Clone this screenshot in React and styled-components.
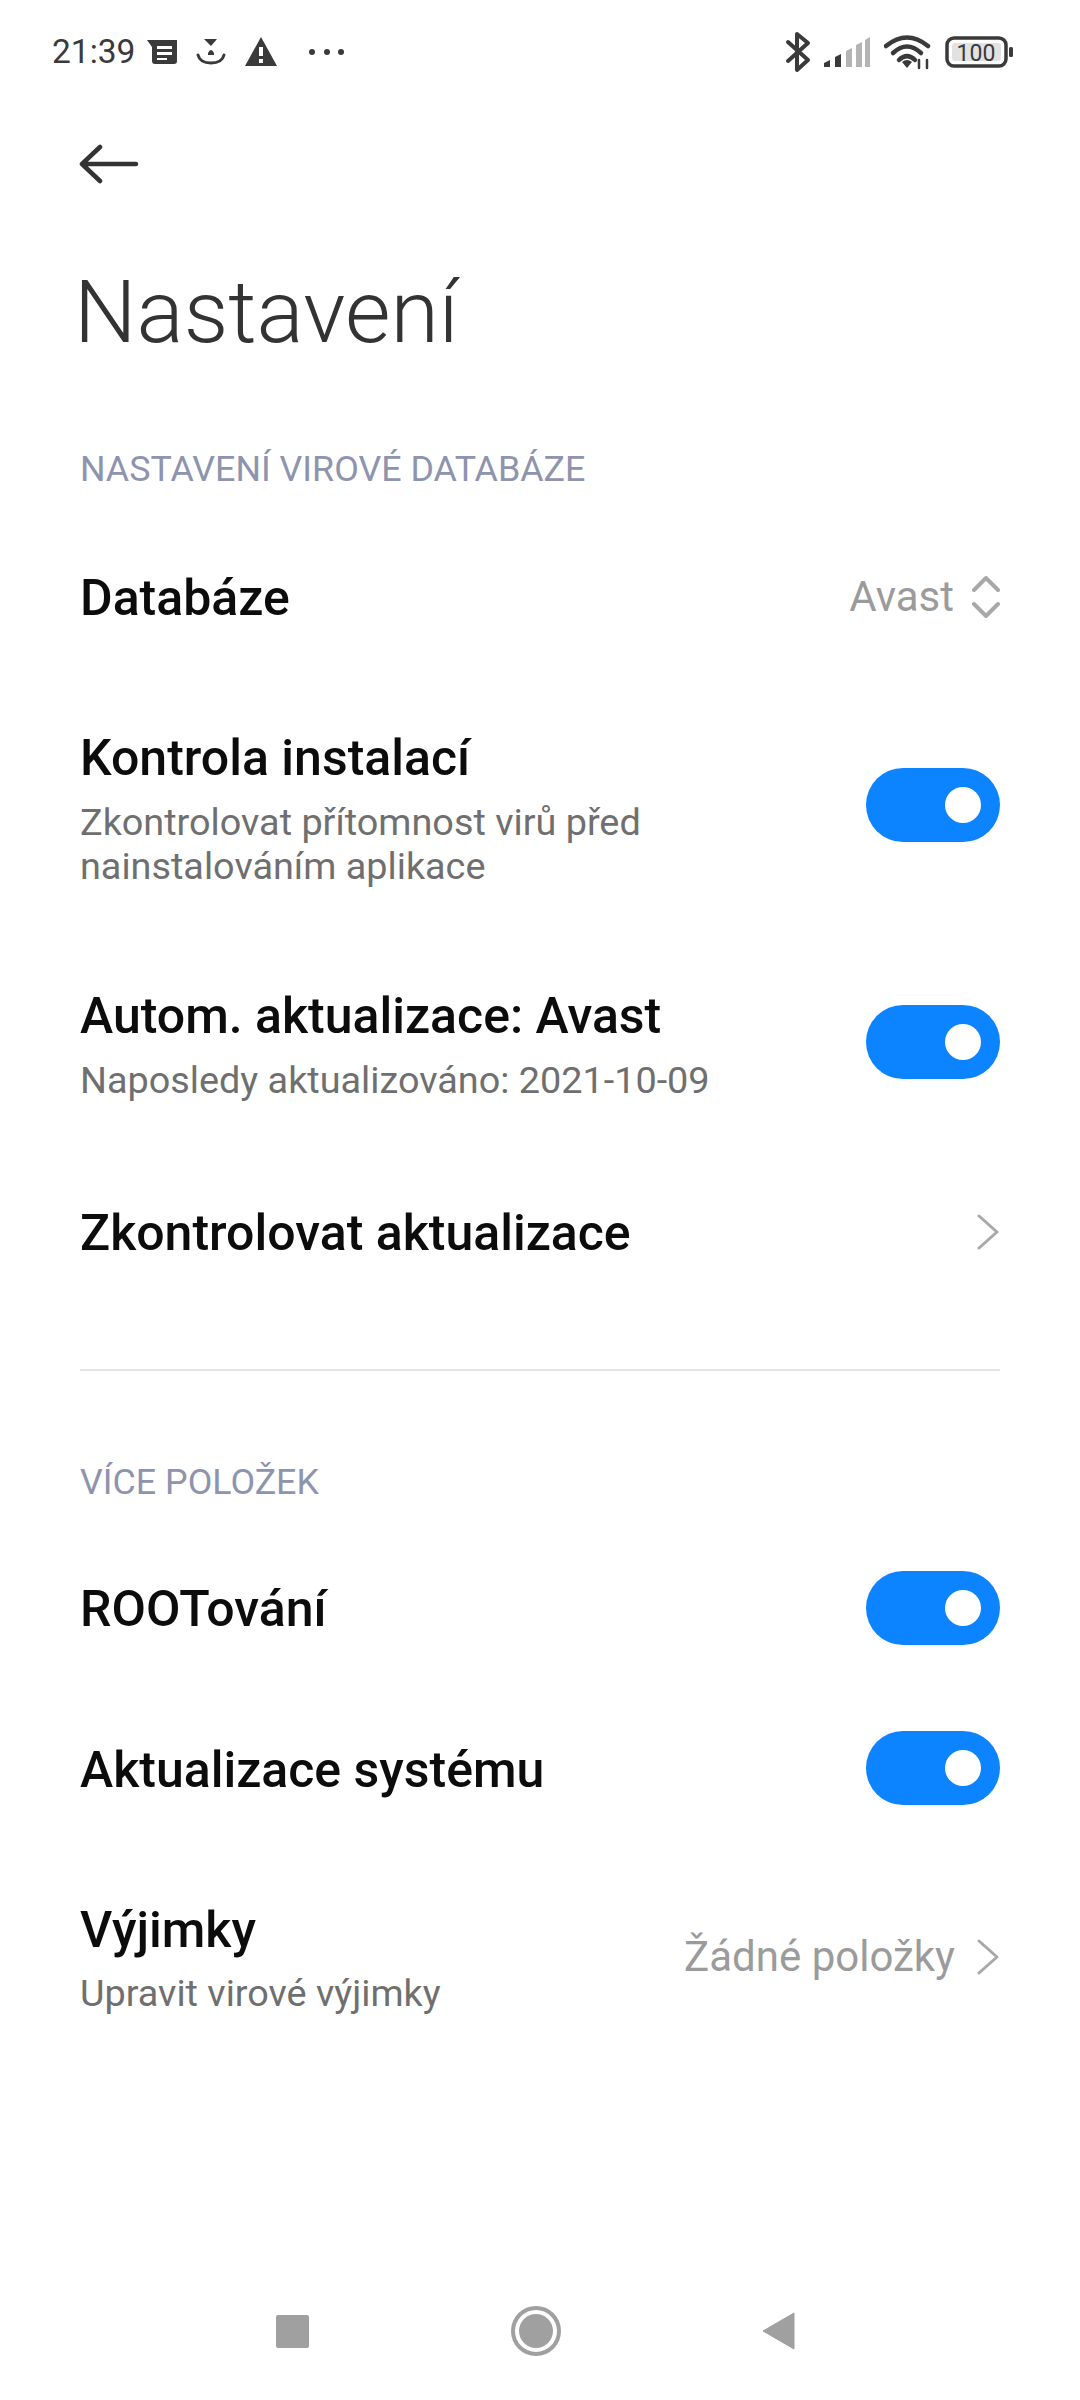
import React from "react";
import styled, { createGlobalStyle } from "styled-components";

const Global = createGlobalStyle`
  html, body { margin: 0; padding: 0; background: #fff; }
  * { box-sizing: border-box; }
  body { font-family: Roboto, "Noto Sans", "Liberation Sans", sans-serif; }
`;
const Page = styled.div`
  width: 1080px; height: 2400px; background: #fff; display: flex; flex-direction: column; overflow: hidden;
`;
const StatusBar = styled.div`
  height: 104px; padding: 0 66px 0 52px; display: flex; align-items: center; justify-content: space-between; color: #333;
`;
const StatusGroup = styled.div`
  display: flex; align-items: center;
`;
const Time = styled.span`
  font-size: 33.5px; line-height: 40px; color: #3a3a3a; width: 92px;
`;
const Icon = styled.svg`
  display: block; flex: none; margin-left: ${p => p.$ml || 0}px;
`;
const BackBar = styled.div`
  height: 120px; padding-left: 79px; display: flex; align-items: center;
`;
const Title = styled.h1`
  margin: 0; height: 176px; padding-left: 74px; font-size: 88px; line-height: 176px; font-weight: 300; color: #333;
`;
const Content = styled.div`
  padding: 0 80px; display: flex; flex-direction: column;
`;
const SectionHead = styled.div`
  height: ${p => p.$h}px; margin-top: ${p => p.$top || 0}px; padding-top: 1px; display: flex; align-items: center;
  font-size: 35.8px; color: #8e94ae;
`;
const Row = styled.div`
  height: ${p => p.$h}px; display: flex; align-items: center; justify-content: space-between;
`;
const TextBlock = styled.div`
  display: flex; flex-direction: column; gap: ${p => p.$gap ?? 12}px; padding-top: ${p => p.$pt ?? 6}px;
`;
const RowTitle = styled.div`
  font-size: 50px; line-height: 60px; font-weight: 500; color: #0c0c0c;
`;
const SoloTitle = styled(RowTitle)`
  padding-top: ${p => p.$pt ?? 1}px;
`;
const RowSub = styled.div`
  font-size: 37.8px; line-height: 44px; color: #6f6f6f;
`;
const Value = styled.div`
  display: flex; align-items: center; gap: 21px; font-size: 42px; line-height: 50px; color: #9b9b9b;
`;
const Toggle = styled.div`
  width: 134px; height: 74px; border-radius: 37px; background: #0d84ff; display: flex; align-items: center;
  justify-content: flex-end; padding-right: 19px; flex: none;
`;
const Knob = styled.div`
  width: 36px; height: 36px; border-radius: 50%; background: #fff;
`;
const Divider = styled.div`
  height: 2px; margin-top: 37px; background: #e4e4e4;
`;
const NavBar = styled.div`
  margin-top: auto; height: 138px; padding: 0 285px 0 276px; display: flex; align-items: center; justify-content: space-between;
`;

const Chevron = () => (
  <Icon width="24" height="38" viewBox="0 0 24 38" fill="none" stroke="#a8a8a8" strokeWidth="3" strokeLinecap="round" strokeLinejoin="round">
    <path d="M3 3 L21 19 L3 35" />
  </Icon>
);
const UpDown = () => (
  <Icon $ml="-3" width="28" height="44" viewBox="0 0 28 44" fill="none" stroke="#a8a8a8" strokeWidth="4" strokeLinecap="round" strokeLinejoin="round">
    <path d="M2 15 L14 3 L26 15" />
    <path d="M2 29 L14 41 L26 29" />
  </Icon>
);
const Switch = () => <Toggle><Knob /></Toggle>;

export default function App() {
  return (
    <Page>
      <Global />
      <StatusBar>
        <StatusGroup>
          <Time>21:39</Time>
          <Icon $ml="3" width="32" height="26" viewBox="0 0 32 26" fill="#3a3a3a">
            <path d="M0 1 H30 V22 Q30 25 27 25 H8 Q5 25 5 22 V8 Z" />
            <path d="M10 7 H25 V10 H10 Z M10 13 H25 V16 H10 Z M10 19 H20 V21 H10 Z" fill="#fff" />
          </Icon>
          <Icon $ml="17" width="30" height="28" viewBox="0 0 30 28" fill="none">
            <path d="M8 1 H21 L15 8 Z M12 15 Q15 9 18 15 V17 H12 Z" fill="#3a3a3a" />
            <path d="M2 17 Q4 25 15 25 Q26 25 28 17" stroke="#3a3a3a" strokeWidth="3" strokeLinecap="round" />
          </Icon>
          <Icon $ml="18" width="34" height="32" viewBox="0 0 34 32" fill="#3a3a3a">
            <path d="M17 1 L33 30 H1 Z" />
            <path d="M15 11 H19 V20 H15 Z M15 23 H19 V27 H15 Z" fill="#fff" />
          </Icon>
          <Icon $ml="30" width="38" height="8" viewBox="0 0 38 8" fill="#3a3a3a">
            <circle cx="4" cy="4" r="3" /><circle cx="19" cy="4" r="3" /><circle cx="33" cy="4" r="3" />
          </Icon>
        </StatusGroup>
        <StatusGroup>
          <Icon width="26" height="42" viewBox="0 0 26 42" fill="none" stroke="#3a3a3a" strokeWidth="4" strokeLinecap="round" strokeLinejoin="round">
            <path d="M3 11 L23 29 L12 39 V3 L23 12 L3 30" />
          </Icon>
          <Icon $ml="12" width="48" height="32" viewBox="0 0 48 32">
            <path d="M1 27 L7 24 V31 H1 Z M12 21 L18 18 V31 H12 Z" fill="#3a3a3a" />
            <path d="M23 15 L29 12 V31 H23 Z M33 9 L39 6 V31 H33 Z M42 4 L47 1 V31 H42 Z" fill="#b4b4b4" />
          </Icon>
          <Icon $ml="13" width="48" height="36" viewBox="0 0 48 36" fill="none" stroke="#3a3a3a" strokeWidth="4.5" strokeLinecap="round">
            <path d="M2 12 Q23 -5 44 12" />
            <path d="M9 19 Q23 6 37 19" />
            <path d="M15 26 Q23 18 31 26" />
            <path d="M18 28 L23 34 L28 28 Q23 24 18 28 Z" fill="#3a3a3a" stroke="none" />
            <path d="M35 26 V34 M43 26 V34" strokeWidth="2.5" />
          </Icon>
          <Icon $ml="13" width="69" height="32" viewBox="0 0 69 32">
            <rect x="2" y="2" width="59" height="28" rx="7" fill="#fff" stroke="#3a3a3a" strokeWidth="3.5" />
            <rect x="7" y="7" width="49" height="18" rx="3" fill="#e2e2e2" />
            <rect x="64" y="11" width="4" height="10" rx="1.5" fill="#3a3a3a" />
            <text x="31" y="25" textAnchor="middle" fontSize="23" fontFamily="Roboto, sans-serif" fill="#3a3a3a">100</text>
          </Icon>
        </StatusGroup>
      </StatusBar>

      <BackBar>
        <Icon width="60" height="40" viewBox="0 0 60 40" fill="none" stroke="#333" strokeWidth="4.5" strokeLinecap="round" strokeLinejoin="round">
          <path d="M3 20 H57 M21 3 L3 20 L21 37" />
        </Icon>
      </BackBar>
      <Title>Nastavení</Title>

      <Content>
        <SectionHead $h={136}>NASTAVENÍ VIROVÉ DATABÁZE</SectionHead>
        <Row $h={122}>
          <SoloTitle>Databáze</SoloTitle>
          <Value>Avast <UpDown /></Value>
        </Row>
        <Row $h={294}>
          <TextBlock>
            <RowTitle>Kontrola instalací</RowTitle>
            <RowSub>Zkontrolovat přítomnost virů před<br />nainstalováním aplikace</RowSub>
          </TextBlock>
          <Switch />
        </Row>
        <Row $h={180}>
          <TextBlock $pt={4}>
            <RowTitle>Autom. aktualizace: Avast</RowTitle>
            <RowSub>Naposledy aktualizováno: 2021-10-09</RowSub>
          </TextBlock>
          <Switch />
        </Row>
        <Row $h={200}>
          <SoloTitle>Zkontrolovat aktualizace</SoloTitle>
          <Value><Chevron /></Value>
        </Row>
        <Divider />
        <SectionHead $h={110} $top={55}>VÍCE POLOŽEK</SectionHead>
        <Row $h={144}>
          <SoloTitle>ROOTování</SoloTitle>
          <Switch />
        </Row>
        <Row $h={176}>
          <SoloTitle $pt={4}>Aktualizace systému</SoloTitle>
          <Switch />
        </Row>
        <Row $h={202}>
          <TextBlock $pt={0} $gap={11}>
            <RowTitle>Výjimky</RowTitle>
            <RowSub>Upravit virové výjimky</RowSub>
          </TextBlock>
          <Value>Žádné položky <Chevron /></Value>
        </Row>
      </Content>

      <NavBar>
        <Icon width="33" height="33" viewBox="0 0 33 33"><rect width="33" height="33" rx="2" fill="#a0a0a0" /></Icon>
        <Icon width="50" height="50" viewBox="0 0 50 50" fill="none">
          <circle cx="25" cy="25" r="23" stroke="#a0a0a0" strokeWidth="4" />
          <circle cx="25" cy="25" r="17" fill="#a0a0a0" />
        </Icon>
        <Icon width="33" height="38" viewBox="0 0 33 38"><path d="M32 1 V37 L1 19 Z" fill="#a0a0a0" stroke="#a0a0a0" strokeLinejoin="round" /></Icon>
      </NavBar>
    </Page>
  );
}
